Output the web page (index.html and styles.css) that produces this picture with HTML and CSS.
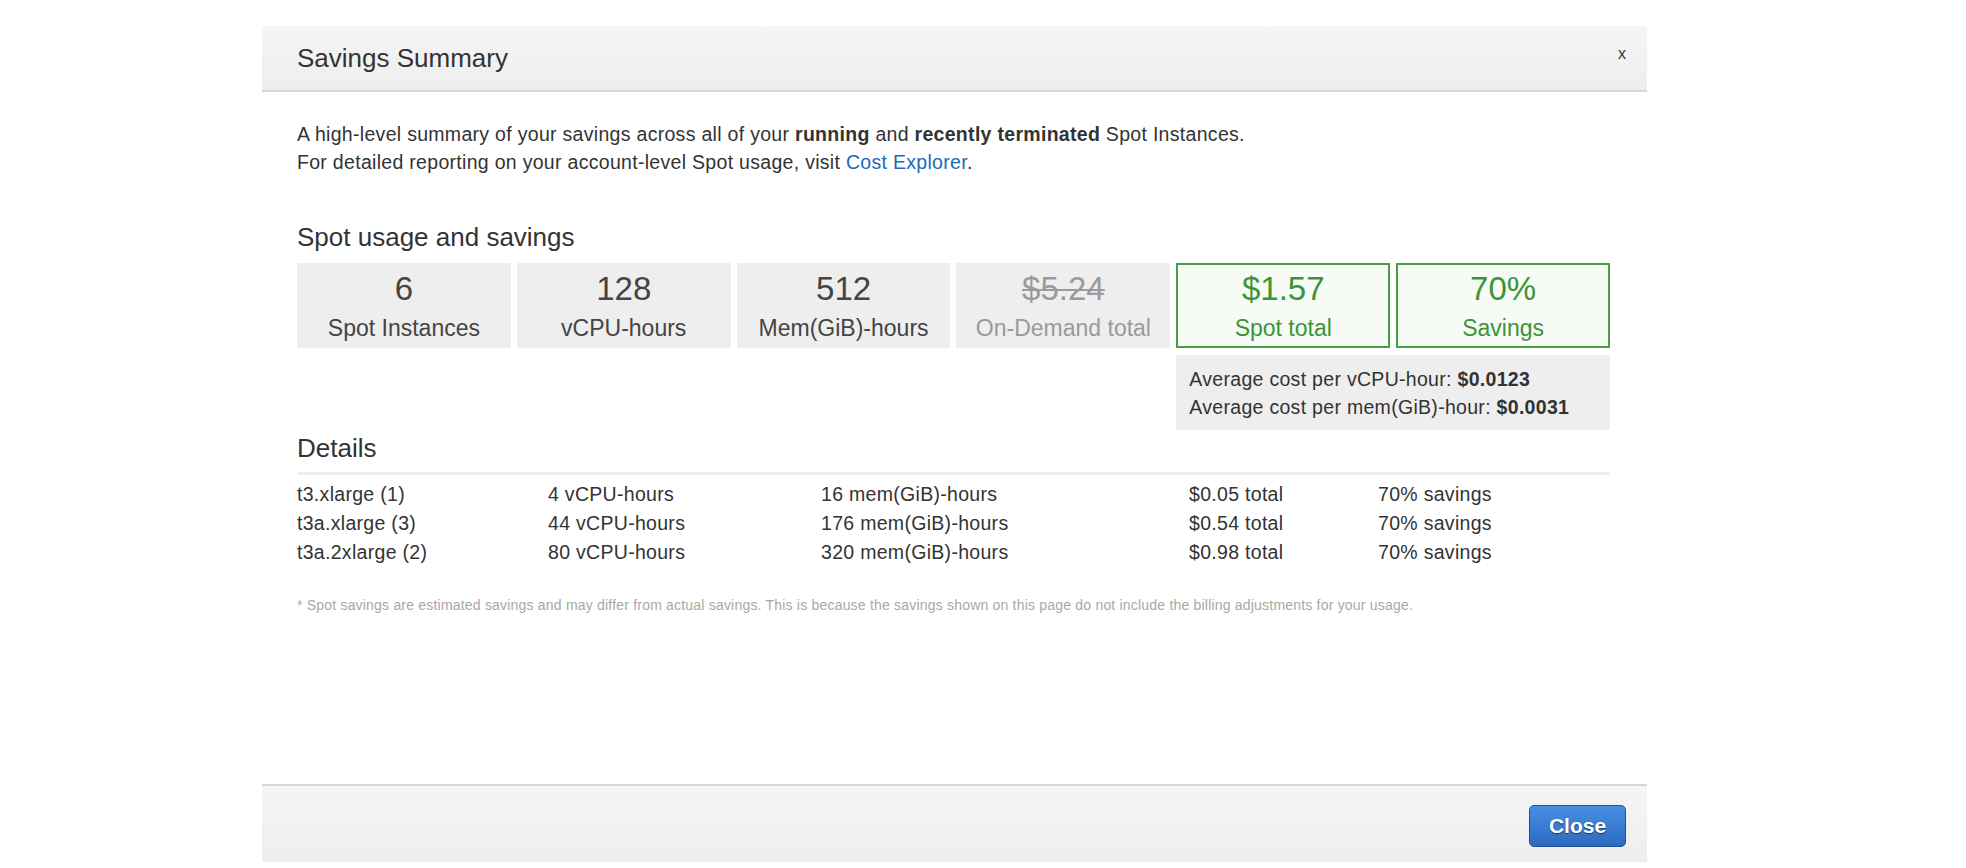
FILE: index.html
```html
<!DOCTYPE html>
<html lang="en">
<head>
<meta charset="utf-8">
<title>Savings Summary</title>
<link rel="stylesheet" href="styles.css">
</head>
<body>
<div class="modal">
  <div class="modal-header">
    <h1 class="modal-title">Savings Summary</h1>
    <span class="modal-x">x</span>
  </div>
  <div class="modal-body">
    <p class="intro">A high-level summary of your savings across all of your <b>running</b> and <b>recently terminated</b> Spot Instances.<br>For detailed reporting on your account-level Spot usage, visit <a class="link" href="#">Cost Explorer</a>.</p>

    <h2 class="section-title">Spot usage and savings</h2>
    <div class="stats">
      <div class="stat"><div class="stat-num">6</div><div class="stat-label">Spot Instances</div></div>
      <div class="stat"><div class="stat-num">128</div><div class="stat-label">vCPU-hours</div></div>
      <div class="stat"><div class="stat-num">512</div><div class="stat-label">Mem(GiB)-hours</div></div>
      <div class="stat stat-muted"><div class="stat-num"><s>$5.24</s></div><div class="stat-label">On-Demand total</div></div>
      <div class="stat stat-good"><div class="stat-num">$1.57</div><div class="stat-label">Spot total</div></div>
      <div class="stat stat-good"><div class="stat-num">70%</div><div class="stat-label">Savings</div></div>
      <div class="avg">
        <div>Average cost per vCPU-hour: <b>$0.0123</b></div>
        <div>Average cost per mem(GiB)-hour: <b>$0.0031</b></div>
      </div>
    </div>

    <h2 class="section-title details-title">Details</h2>
    <div class="details">
      <div>t3.xlarge (1)</div><div>4 vCPU-hours</div><div>16 mem(GiB)-hours</div><div>$0.05 total</div><div>70% savings</div>
      <div>t3a.xlarge (3)</div><div>44 vCPU-hours</div><div>176 mem(GiB)-hours</div><div>$0.54 total</div><div>70% savings</div>
      <div>t3a.2xlarge (2)</div><div>80 vCPU-hours</div><div>320 mem(GiB)-hours</div><div>$0.98 total</div><div>70% savings</div>
    </div>

    <p class="footnote">* Spot savings are estimated savings and may differ from actual savings. This is because the savings shown on this page do not include the billing adjustments for your usage.</p>
  </div>
  <div class="modal-footer">
    <button class="btn-close" type="button">Close</button>
  </div>
</div>
</body>
</html>
```

FILE: styles.css
```css
html, body {
  margin: 0;
  padding: 0;
  background: #ffffff;
}

body {
  font-family: "Liberation Sans", Arial, sans-serif;
  color: #333333;
  padding-top: 26px;
  padding-left: 262px;
}

.modal {
  width: 1385px;
  display: flex;
  flex-direction: column;
  background: #ffffff;
}

.modal-header {
  height: 64px;
  display: flex;
  align-items: center;
  justify-content: space-between;
  padding: 0 21px 0 35px;
  background: linear-gradient(#f5f5f5, #eeeeee);
  border-bottom: 2px solid #d6d6d6;
}

.modal-title {
  margin: 0;
  font-size: 26px;
  font-weight: normal;
  color: #333333;
}

.modal-x {
  font-size: 16px;
  color: #333333;
  margin-top: -8px;
}

.modal-body {
  padding: 29px 37px 0 35px;
  height: 692px;
  box-sizing: border-box;
}

.intro {
  margin: 0;
  font-size: 19.5px;
  letter-spacing: 0.3px;
  line-height: 27.5px;
  color: #333333;
}

.intro b {
  font-weight: bold;
}

.link {
  color: #1d6ab8;
  text-decoration: none;
}

.section-title {
  margin: 46px 0 0 0;
  font-size: 26px;
  line-height: 30px;
  font-weight: normal;
  color: #333333;
}

.stats {
  margin-top: 11px;
  display: grid;
  grid-template-columns: repeat(6, 1fr);
  column-gap: 6px;
  row-gap: 7px;
}

.stat {
  height: 85px;
  box-sizing: border-box;
  background: #eeeeee;
  display: flex;
  flex-direction: column;
  align-items: center;
  padding-top: 7px;
}

.stat-num {
  font-size: 33px;
  line-height: 38px;
  color: #444444;
}

.stat-label {
  font-size: 23px;
  line-height: 34px;
  margin-top: 3px;
  color: #444444;
}

.stat-muted .stat-num,
.stat-muted .stat-label {
  color: #9a9a9a;
}

.stat-muted s {
  text-decoration-thickness: 2px;
}

.stat-good {
  background: #f6fbf5;
  border: 2px solid #4a9d46;
  padding-top: 5px;
}

.stat-good .stat-num,
.stat-good .stat-label {
  color: #3c9438;
}

.avg {
  grid-column: 5 / 7;
  background: #eeeeee;
  height: 75px;
  box-sizing: border-box;
  padding: 11px 13px 0 13px;
  font-size: 19.5px;
  letter-spacing: 0.3px;
  line-height: 27.5px;
  color: #333333;
}

.details-title {
  margin-top: 3px;
}

.details {
  margin-top: 9px;
  border-top: 3px solid #eeeeee;
  padding-top: 5px;
  display: grid;
  grid-template-columns: 251px 273px 368px 189px 1fr;
  font-size: 19.5px;
  letter-spacing: 0.3px;
  line-height: 29px;
  color: #333333;
}

.footnote {
  margin: 29px 0 0 0;
  font-size: 14px;
  letter-spacing: 0.2px;
  line-height: 18px;
  color: #a8a8a8;
}

.modal-footer {
  height: 76px;
  border-top: 2px solid #d6d6d6;
  background: linear-gradient(#f5f5f5, #eeeeee);
  display: flex;
  align-items: center;
  justify-content: flex-end;
  padding-right: 21px;
}

.btn-close {
  width: 97px;
  height: 42px;
  border: 1px solid #1f4f95;
  border-radius: 5px;
  background: linear-gradient(#4790e3, #2c6ac0);
  color: #ffffff;
  font-family: "Liberation Sans", Arial, sans-serif;
  font-size: 21px;
  font-weight: bold;
  text-shadow: 0 1px 1px rgba(0, 0, 0, 0.55);
  cursor: pointer;
  margin-top: 4px;
}
```
